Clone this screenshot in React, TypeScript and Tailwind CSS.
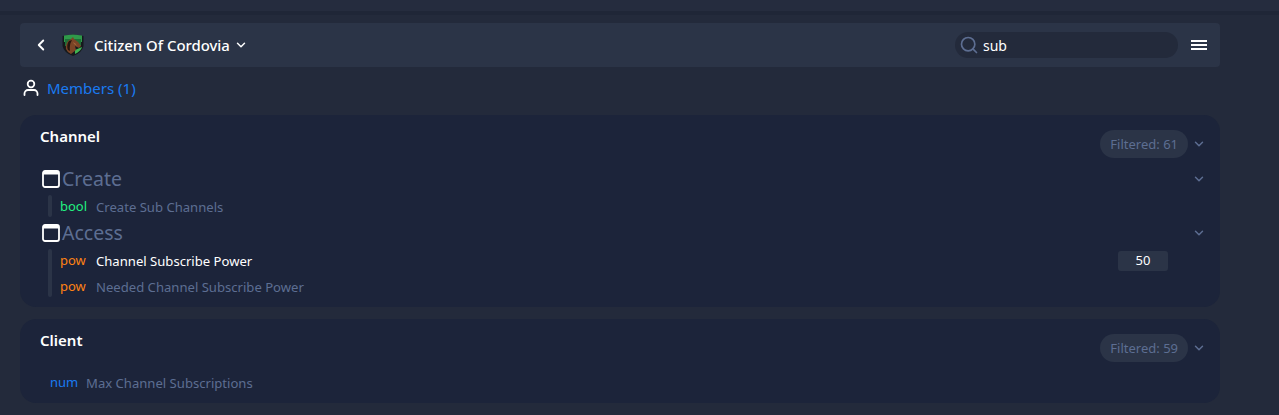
import React from 'react';
import { ChevronLeft, ChevronDown, Search } from 'lucide-react';

function Crest() {
  return (
    <svg width="22" height="22" viewBox="0 0 22 22" className="shrink-0">
      <path d="M0.5 2 Q6 1 11 0.5 Q16 1 21.5 2 L21.5 12 Q20 19 11 22 Q2 19 0.5 12 Z" fill="#15191c" />
      <path d="M2 1.5 Q6 1 11 0.5 Q16 1 20 1.5 L20 8 L2 8 Z" fill="#2f9a4a" />
      <path d="M3 5 L19 5 L19 12 L3 12 Z" fill="#1f6e37" />
      <path d="M13 16 L20 13 Q19 17 13 20 Z" fill="#3fb553" />
      <path d="M4 15 Q3 8 9 5 L11 3 L12 5 Q16 7 19 12 L17 14 L13 12 L14 16 L9 20 Q5 18 4 15 Z" fill="#7a4426" />
      <path d="M7 7 Q4 11 6 16 L8 17 Q7 11 10 6 Z" fill="#24160f" />
      <path d="M11 8 Q14 9 15 12 L12 10 Z" fill="#a0633a" />
    </svg>
  );
}

function WindowIcon() {
  return (
    <svg width="18" height="18" viewBox="0 0 18 18" className="shrink-0">
      <rect x="1" y="1" width="16" height="16" rx="2" fill="none" stroke="#fff" strokeWidth="1.8" />
      <rect x="1" y="1" width="16" height="3.5" fill="#fff" />
    </svg>
  );
}

function PersonIcon() {
  return (
    <svg width="18" height="18" viewBox="0 0 18 18" fill="none" stroke="#fff" strokeWidth="1.8" strokeLinecap="round" className="shrink-0">
      <circle cx="9" cy="5" r="3.3" />
      <path d="M2.5 16 V14.5 a3.5 3.5 0 0 1 3.5 -3.5 h6 a3.5 3.5 0 0 1 3.5 3.5 V16" />
    </svg>
  );
}

function Row({ kind, color, label, active, value }: { kind: string; color: string; label: string; active?: boolean; value?: string }) {
  return (
    <div className="flex h-[26px] items-center pt-[2px]">
      <span className={`w-[36px] text-[13px] leading-none -mt-[4px] ${color}`}>{kind}</span>
      <span className={`text-[13.1px] ${active ? 'text-white' : 'text-[#5d6e92]'}`}>{label}</span>
      {value && (
        <span className="ml-auto mr-[2px] -mt-[2px] flex h-[20px] w-[50px] items-center justify-center rounded-[3px] bg-[#2b3447] text-[13px] text-white">
          {value}
        </span>
      )}
    </div>
  );
}

function GroupTitle({ title }: { title: string }) {
  return (
    <div className="flex h-[26px] items-center pl-[2px]">
      <WindowIcon />
      <span className="flex-1 pl-[2px] text-[19.5px] leading-none text-[#5d6e92]">{title}</span>
      <ChevronDown size={14} strokeWidth={2.5} className="mr-[1px] text-[#5d6e92]" />
    </div>
  );
}

function CardHead({ title, count }: { title: string; count: string }) {
  return (
    <div className="flex items-start justify-between">
      <span className="mt-[11px] text-[15px] font-semibold leading-[20px] text-white">{title}</span>
      <div className="mt-[15px] mr-[1px] flex items-center gap-[4px]">
        <span className="flex h-[28px] items-center rounded-full bg-[#2b3447] pl-[10px] pr-[10px] pt-[1px] text-[13px] text-[#5d6e92]">
          Filtered: {count}
        </span>
        <ChevronDown size={14} strokeWidth={2.5} className="text-[#5d6e92]" />
      </div>
    </div>
  );
}

export default function App() {
  return (
    <div className="h-[415px] w-full overflow-hidden bg-[#232a3b] font-['Noto_Sans',sans-serif]">
      <div className="h-[11px] bg-[#252c3e]" />
      <div className="h-[4px] bg-[#1f2637]" />

      <div className="ml-[20px] w-[1200px] pt-[8px]">
        <div className="flex h-[44px] items-center rounded-[4px] bg-[#2b3447] pl-[12px] pr-[13px]">
          <ChevronLeft size={18} strokeWidth={2.5} className="text-white" />
          <div className="ml-[12px]"><Crest /></div>
          <span className="ml-[10px] text-[14.9px] font-medium text-white">Citizen Of Cordovia</span>
          <ChevronDown size={14} strokeWidth={2.5} className="ml-[4px] text-white" />
          <div className="ml-auto flex h-[26px] w-[223px] items-center rounded-full bg-[#232a3b] pl-[4px]">
            <Search size={20} strokeWidth={2} className="text-[#5d6e92]" />
            <span className="ml-[4px] text-[14px] text-white">sub</span>
          </div>
          <div className="ml-[13px] flex w-[16px] flex-col gap-[2px]">
            <div className="h-[2px] bg-white" />
            <div className="h-[2px] bg-white" />
            <div className="h-[2px] bg-white" />
          </div>
        </div>

        <div className="flex h-[42px] items-center pl-[2px]">
          <PersonIcon />
          <span className="ml-[7px] text-[15px] text-[#1a7bf2]">Members (1)</span>
        </div>

        <div className="mt-[6px] h-[192px] rounded-[16px] bg-[#1c243a] pl-[20px] pr-[13px]">
          <CardHead title="Channel" count="61" />
          <div className="mt-[8px]">
            <GroupTitle title="Create" />
            <div className="ml-[8px] mt-[3px] flex items-start">
              <div className="h-[22px] w-[4px] rounded-[2px] bg-[#2b3447]" />
              <div className="flex-1 pl-[8px] -mt-[1px]">
                <Row kind="bool" color="text-[#22f080]" label="Create Sub Channels" />
              </div>
            </div>
            <GroupTitle title="Access" />
            <div className="ml-[8px] mt-[3px] flex items-start">
              <div className="h-[48px] w-[4px] rounded-[2px] bg-[#2b3447]" />
              <div className="flex-1 pl-[8px] pr-[37px] -mt-[1px]">
                <Row kind="pow" color="text-[#ff8214]" label="Channel Subscribe Power" active value="50" />
                <Row kind="pow" color="text-[#ff8214]" label="Needed Channel Subscribe Power" />
              </div>
            </div>
          </div>
        </div>

        <div className="mt-[12px] h-[84px] rounded-[16px] bg-[#1c243a] pl-[20px] pr-[13px]">
          <CardHead title="Client" count="59" />
          <div className="mt-[8px] pl-[10px]">
            <Row kind="num" color="text-[#1a7bf2]" label="Max Channel Subscriptions" />
          </div>
        </div>
      </div>
    </div>
  );
}
